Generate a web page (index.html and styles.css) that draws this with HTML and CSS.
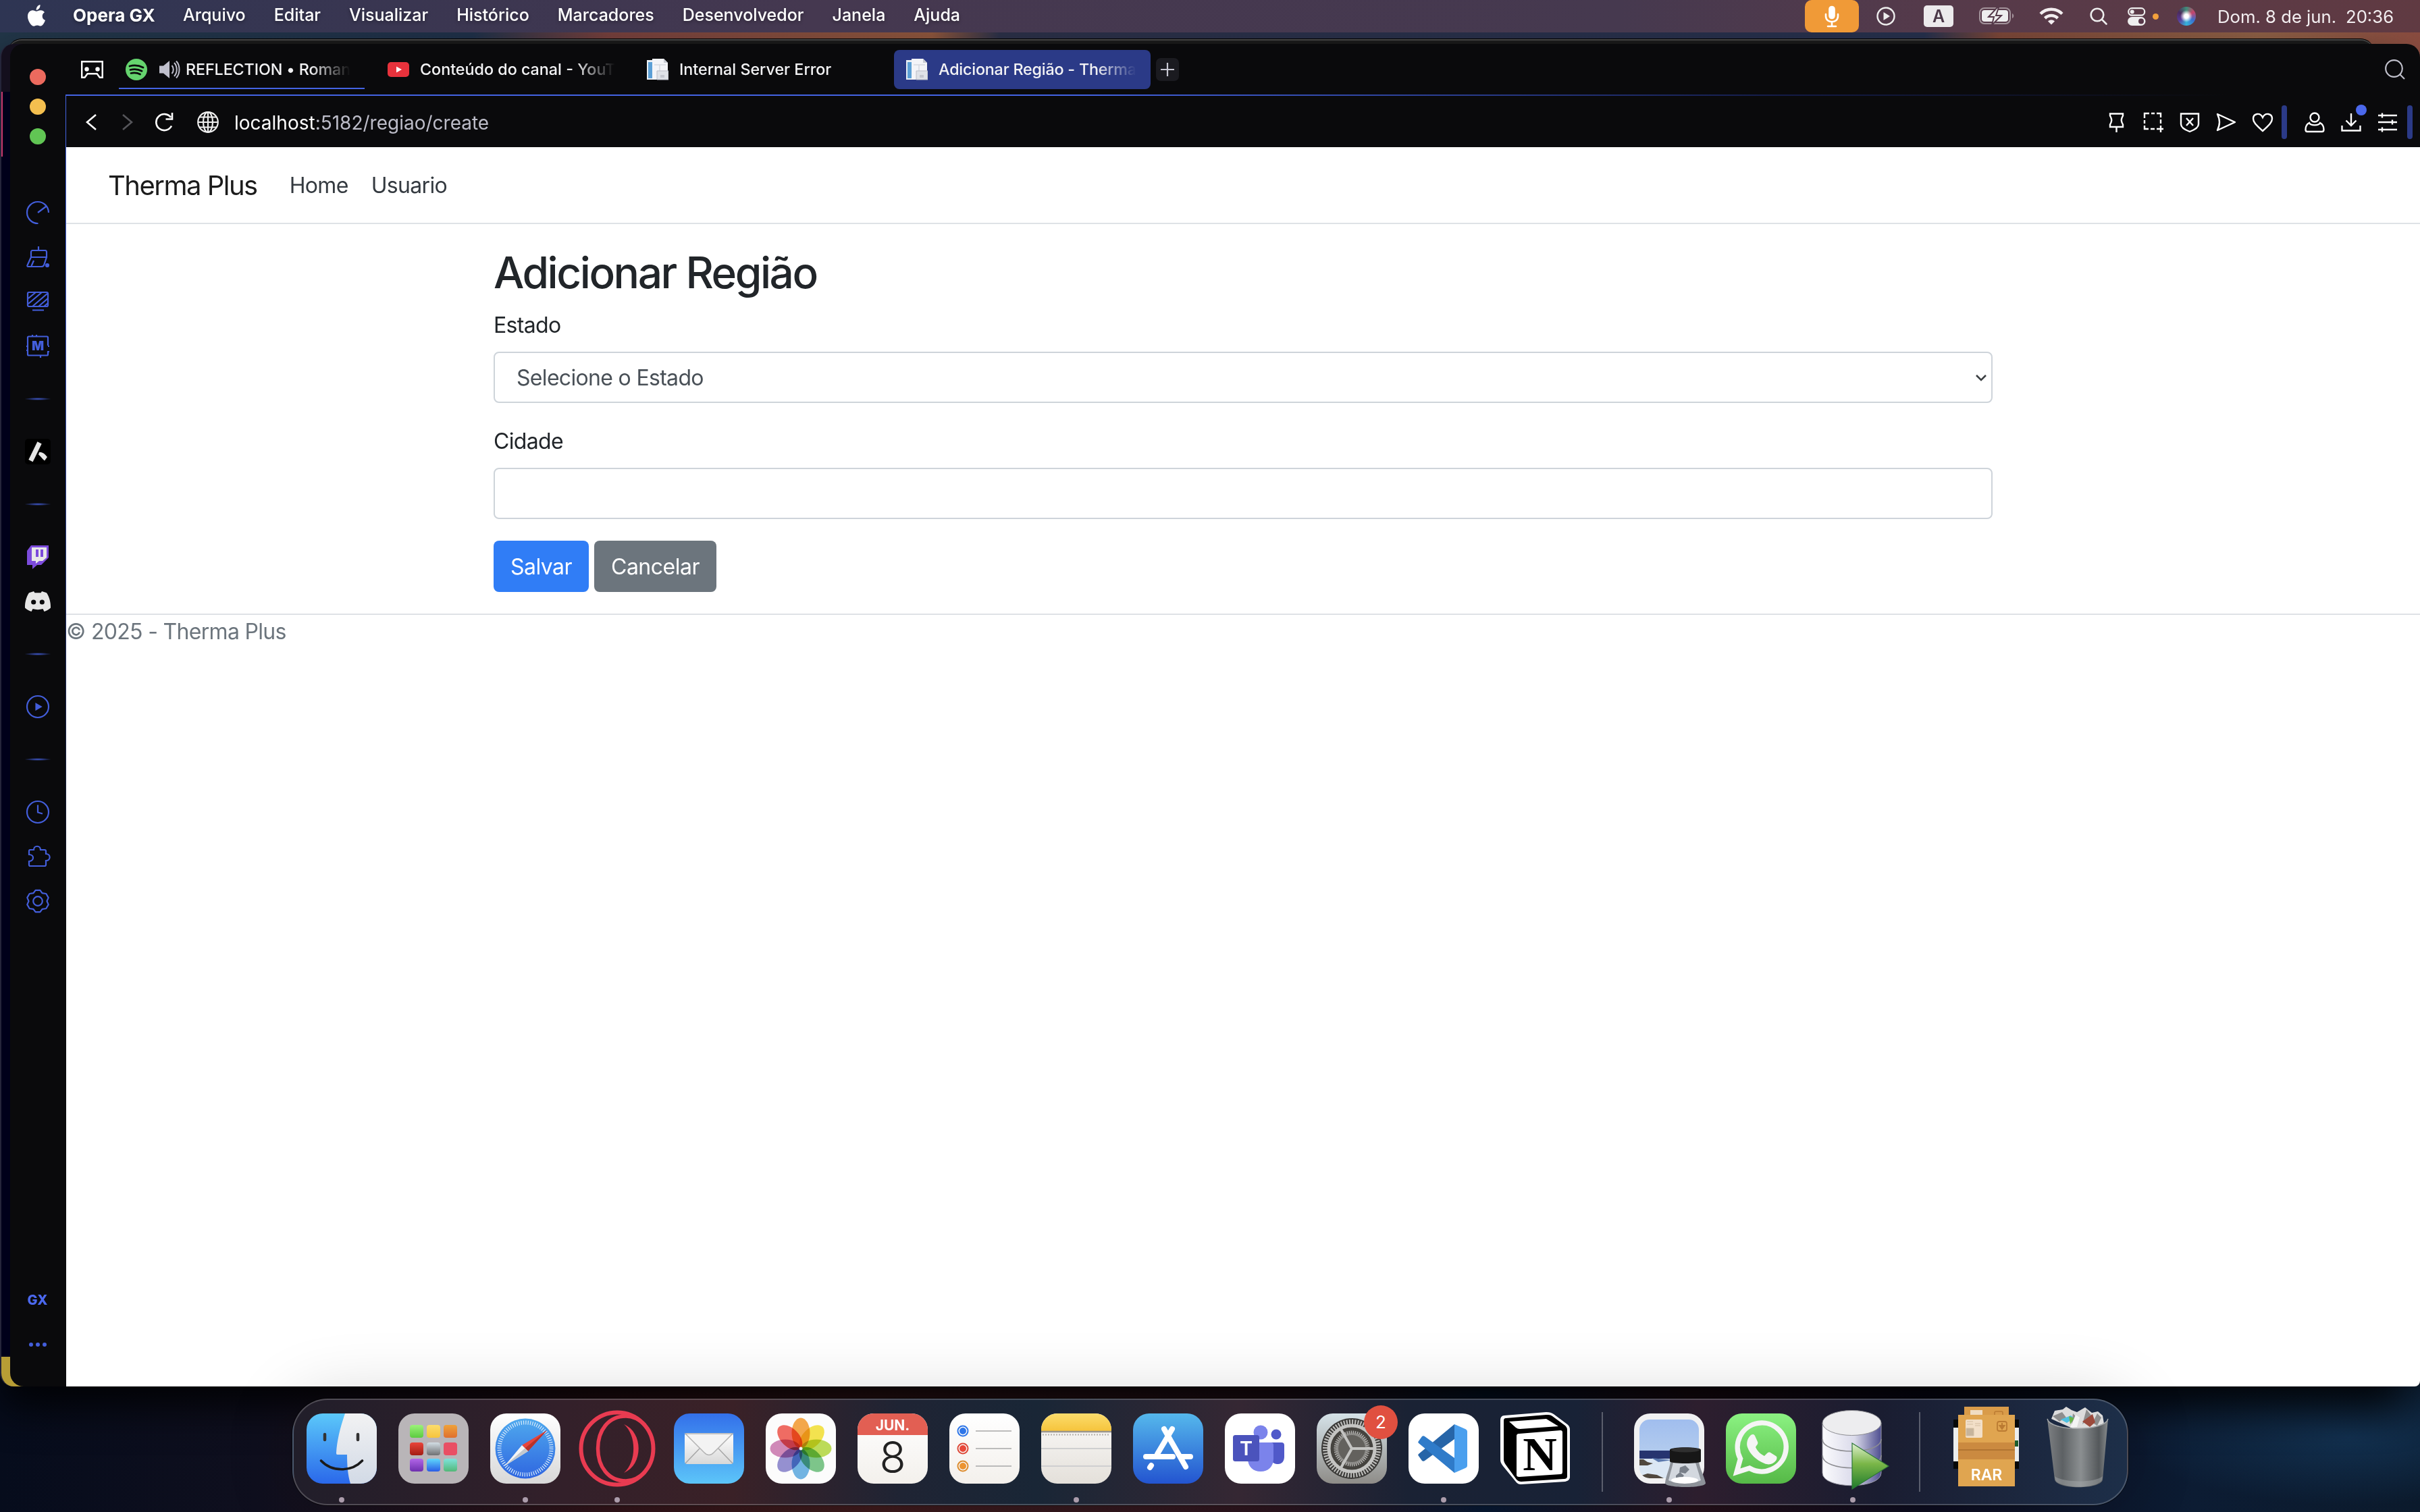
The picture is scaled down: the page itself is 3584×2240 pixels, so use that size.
FILE: index.html
```html
<!DOCTYPE html>
<html lang="pt-BR">
<head>
<meta charset="utf-8">
<title>Adicionar Região - Therma Plus</title>
<link rel="stylesheet" href="styles.css">
</head>
<body>
<svg class="defs" width="0" height="0">
  <defs>
    <symbol id="page" viewBox="0 0 32 32">
      <path d="M0 2h20v29H0z" fill="#e9eef4"/><path d="M2 5h6v24H2z" fill="#5b9fd6"/>
      <path d="M8 0h17l6 6v24H8z" fill="#f3f4f8"/><path d="M25 0v6h6z" fill="#c6cad2"/>
      <path d="M11 9h17M19 9v12" stroke="#d5d8e0" stroke-width="1.5"/>
      <path d="M15 18h17v13H15z" fill="#dfe2e8" stroke="#b9bcc6"/><path d="M20 24h6v4h-6z" fill="#c4c7d0"/>
    </symbol>
    <linearGradient id="gFinder" x2="0" y2="1"><stop stop-color="#5bc8fa"/><stop offset="1" stop-color="#2a68ea"/></linearGradient>
    <linearGradient id="gFace" x2="0" y2="1"><stop stop-color="#f2f2f3"/><stop offset="1" stop-color="#d2dae6"/></linearGradient>
    <linearGradient id="gWhite" x2="0" y2="1"><stop stop-color="#fff"/><stop offset="1" stop-color="#d8d8d8"/></linearGradient>
    <linearGradient id="gPaper" x2="0" y2="1"><stop stop-color="#fff"/><stop offset="1" stop-color="#f3f0ec"/></linearGradient>
    <linearGradient id="gNote" x2="0" y2="1"><stop stop-color="#fbfaf9"/><stop offset="1" stop-color="#e4e0da"/></linearGradient>
    <linearGradient id="gYellow" x2="0" y2="1"><stop stop-color="#fbdc6c"/><stop offset="1" stop-color="#f6c43c"/></linearGradient>
    <linearGradient id="gSafari" x2="0" y2="1"><stop stop-color="#4fa9ee"/><stop offset="1" stop-color="#2f66e0"/></linearGradient>
    <linearGradient id="gMail" x2="0" y2="1"><stop stop-color="#3370ea"/><stop offset="1" stop-color="#5cc5f9"/></linearGradient>
    <linearGradient id="gStore" x2="0" y2="1"><stop stop-color="#55b8ec"/><stop offset="1" stop-color="#2354d0"/></linearGradient>
    <linearGradient id="gSet" x2="0" y2="1"><stop stop-color="#d5e2e8"/><stop offset="1" stop-color="#8e8c88"/></linearGradient>
    <linearGradient id="gWa" x2="0" y2="1"><stop stop-color="#8bf282"/><stop offset="1" stop-color="#56b947"/></linearGradient>
    <linearGradient id="gCyl"><stop stop-color="#fbfbfd"/><stop offset=".55" stop-color="#dadaea"/><stop offset="1" stop-color="#4e4e90"/></linearGradient>
    <linearGradient id="gPlay" x2="0" y2="1"><stop stop-color="#e2f2d2"/><stop offset=".45" stop-color="#7ab648"/><stop offset="1" stop-color="#1f7a2c"/></linearGradient>
    <linearGradient id="gCan"><stop stop-color="#7d8083"/><stop offset=".25" stop-color="#5d6164"/><stop offset=".55" stop-color="#8b8f91"/><stop offset=".85" stop-color="#54585b"/><stop offset="1" stop-color="#888c8e"/></linearGradient>
    <linearGradient id="gSky" x2="0" y2="1"><stop stop-color="#9dbbee"/><stop offset="1" stop-color="#b2cbee"/></linearGradient>
    <linearGradient id="gG1" x2="0" y2="1"><stop stop-color="#9cf279"/><stop offset="1" stop-color="#5ccb41"/></linearGradient>
    <linearGradient id="gG3" x2="0" y2="1"><stop stop-color="#efa23a"/><stop offset="1" stop-color="#df6f2d"/></linearGradient>
    <linearGradient id="gG4" x2="0" y2="1"><stop stop-color="#e9443a"/><stop offset="1" stop-color="#a31d14"/></linearGradient>
    <linearGradient id="gG5" x2="0" y2="1"><stop stop-color="#d2dde4"/><stop offset="1" stop-color="#6f7173"/></linearGradient>
    <linearGradient id="gG7" x2="0" y2="1"><stop stop-color="#b266e8"/><stop offset="1" stop-color="#6e2fae"/></linearGradient>
    <linearGradient id="gG8" x2="0" y2="1"><stop stop-color="#5fd8fb"/><stop offset="1" stop-color="#2a5ce6"/></linearGradient>
    <linearGradient id="gG9" x2="0" y2="1"><stop stop-color="#7fe3dc"/><stop offset="1" stop-color="#52b878"/></linearGradient>
    <clipPath id="tile"><rect width="104" height="104" rx="24"/></clipPath>
    <clipPath id="pic"><rect x="8" y="9" width="88" height="87" rx="15"/></clipPath>
  </defs>
</svg>

<header class="menubar">
  <svg class="apple" viewBox="0 0 26 32"><path fill="#fff" d="M18.500 0c.3 2.900-.9 5-2.300 6.300-1.200 1.200-2.700 1.700-3.500 1.600-.2-2.300.8-4.500 2.100-5.800C15.800 1 17.300.2 18.500 0zM25 11.300c-2.600 1.700-3.300 3.700-3.300 5.600 0 2.700 1.500 5 4.300 6.200-1.300 3.800-4 8.400-6.700 8.500-2 .1-2.700-1.200-5.100-1.200-2.400 0-3.100 1.200-5 1.300C5.300 31.800 0 23.600 0 17.400 0 11.800 3.400 8.300 7.300 8.300c2.400 0 4.100 1.400 5.600 1.400 1.500 0 3.600-1.600 6.400-1.500 2.500.1 4.500 1.200 5.700 3.100z"/></svg>
  <nav class="menus"><b>Opera GX</b><span>Arquivo</span><span>Editar</span><span>Visualizar</span><span>Histórico</span><span>Marcadores</span><span>Desenvolvedor</span><span>Janela</span><span>Ajuda</span></nav>
  <div class="status">
    <span class="mic"><svg width="24" height="34" viewBox="0 0 24 34" fill="none" stroke="#fff" stroke-width="2.600" stroke-linecap="round"><rect x="8.500" y="3" width="7" height="17" rx="3.500" fill="#fff"/><path d="M3 14v3c0 11 18 11 18 0v-3M12 26v5M6 32h12"/></svg></span>
    <svg class="s-play" width="28" height="28" viewBox="0 0 28 28"><circle cx="14" cy="14" r="12.500" fill="none" stroke="#eee" stroke-width="2.400"/><path d="M10.500 8l9.500 6-9.500 6z" fill="#eee"/></svg>
    <span class="s-a">A</span>
    <svg class="s-bat" width="52" height="26" viewBox="0 0 52 26"><rect x="1" y="1" width="45" height="23" rx="7" fill="none" stroke="#a2929a" stroke-width="2"/><rect x="4" y="4" width="39" height="17" rx="4" fill="#eee"/><path d="M49 9c3 1 3 6 0 7z" fill="#a2929a"/><path d="M27 0L14 14h8l-3 12 14-14h-8l4-12z" fill="#eee" stroke="#55394a" stroke-width="2"/></svg>
    <svg class="s-wifi" width="36" height="26" viewBox="0 0 36 26" fill="none" stroke="#f3eef0" stroke-width="4.500"><path d="M2 9.500c9-9 23-9 32 0M8.500 16c5.500-5.200 13.500-5.200 19 0"/><path d="M13 20.500c3-2.600 7-2.600 10 0l-5 5z" fill="#f3eef0" stroke="none"/></svg>
    <svg class="s-find" width="26" height="26" viewBox="0 0 26 26" fill="none" stroke="#eee" stroke-width="2.600" stroke-linecap="round"><circle cx="11" cy="11" r="9.300"/><path d="M18 18l6.500 6.500"/></svg>
    <svg class="s-cc" width="27" height="27" viewBox="0 0 27 27"><rect x="1.200" y="1.200" width="24" height="10.500" rx="5.200" fill="none" stroke="#eee" stroke-width="2.200"/><circle cx="6.700" cy="6.500" r="3" fill="#eee"/><rect y="14" width="26.500" height="13" rx="6.500" fill="#eee"/><circle cx="20" cy="20.500" r="4" fill="#59394a"/></svg>
    <i class="s-dot"></i>
    <i class="siri"></i>
    <span class="date">Dom. 8 de jun.</span><span class="time">20:36</span>
  </div>
</header>

<div class="win-gray"></div>
<div class="win-navy"><i class="pink"></i><i class="gold"></i></div>

<section class="opera">
  <aside class="side">
    <div class="lights"><i class="r"></i><i class="y"></i><i class="g"></i></div>
    <div class="tools">
      <div class="slot"><svg viewBox="0 0 34 34"><path d="M17.500 33A16 16 0 1 1 33 17M17 17L29 8"/></svg></div>
      <div class="slot"><svg viewBox="0 0 34 34"><path d="M18 1v6M7 17V9.500C7 8 8 7 9 7h19c1 0 2 1 2 2.500V17zM7 17L1.500 29c-.5 1 0 2 1 2H22c2.500 0 3.500-1 4-2l4-12M11 22l-3.500 8"/><circle cx="31" cy="29" r="2" fill="#435edb"/></svg></div>
      <div class="slot"><svg viewBox="0 0 34 34"><rect x="2" y="3" width="30" height="21" rx="2"/><path d="M9 29.500h17M3 12L14 3M3 20L23 3M9 24L31 5M18 24l14-12M26 24l6-5"/></svg></div>
      <div class="slot"><svg viewBox="0 0 34 34"><path d="M32 16V4c0-1-.5-1.500-1.500-1.500h-27C2.500 2.500 2 3 2 4v25c0 1 .5 1.500 1.500 1.500h27c1 0 1.500-.5 1.500-1.500v-4.500M0 17h2M0 23h2M9 0v2M15 0v2M21 31v3M32 17h2M31 25h3"/></svg><b class="m">M</b></div>
      <div class="sep"></div>
      <div class="slot"><svg class="raw w38" viewBox="0 0 38 38"><rect width="38" height="38" rx="5" fill="#000"/><path d="M10 29.500L20 9" stroke="#e6e6e6" stroke-width="7" stroke-linecap="square"/><path d="M21 20c5-.5 8 2 12 7l-4 5.500c-4-3-5-6-9-9z" fill="#e6e6e6"/></svg></div>
      <div class="sep"></div>
      <div class="slot"><svg class="raw w32" viewBox="0 0 32 35"><path d="M6 0h26v18L21 29h-6l-7 6v-6H0V8z" fill="#7c4bdc"/><path d="M7 3h22v15l-6 5h-5l-5 4v-4H7z" fill="#e8e8e8"/><path d="M13 6h4v11h-4zM20 6h4v11h-4z" fill="#7c4bdc"/></svg></div>
      <div class="slot"><svg class="raw w38" viewBox="0 0 38 30"><path d="M13 0l1.500 2.200h9L25 0l7 2.300c4 6 6.300 14 6 22.200-2.500 2.500-6 4.500-9.500 5.500l-2-4c-5 1.500-10 1.500-15 0l-2 4C6 29 2.500 27 0 24.500-.3 16.300 2 8.300 6 2.300z" fill="#e6e6e6"/><circle cx="12.700" cy="16" r="3.600" fill="#0a0a0c"/><circle cx="25.300" cy="16" r="3.600" fill="#0a0a0c"/></svg></div>
      <div class="sep"></div>
      <div class="slot"><svg viewBox="0 0 34 34"><circle cx="17" cy="17" r="16"/><path d="M14.500 13l7 4-7 4z" fill="#435edb"/></svg></div>
      <div class="sep"></div>
      <div class="slot"><svg viewBox="0 0 34 34"><circle cx="17" cy="17" r="16"/><path d="M17 6.500v11l7 2"/></svg></div>
      <div class="slot"><svg viewBox="0 0 34 34"><path d="M4 9c0-1 .5-2 1.500-2H11c0-7 10-7 10 0h6c1 0 2 1 2 2v4c7.500 0 7.500 10 0 10v6c0 1-1 2-2 2H5.500C4.500 31 4 30 4 29v-5c8-.5 8-10 0-10z"/></svg></div>
      <div class="slot"><svg viewBox="0 0 34 34" stroke-linejoin="round"><circle cx="17" cy="17" r="6.800"/><path d="M13.600.9h6.800l3.100 4.300 5.800.8 3.400 5.900L30.500 17l2.200 5.100-3.400 5.900-5.800.8-3.100 4.300h-6.800l-3.100-4.300-5.800-.8-3.400-5.900L3.500 17l-2.200-5.100L4.700 6l5.800-.8z"/></svg></div>
    </div>
    <div class="gx">GX</div>
    <div class="dots"><i></i><i></i><i></i></div>
  </aside>
  <div class="main">
    <div class="tabs">
      <svg class="cassette" width="33" height="26" viewBox="0 0 33 26"><path d="M1.200 1.200h30.500v23.500h-4l-4-5.500H9.500l-4 5.500H1.200z" fill="none" stroke="#fff" stroke-width="2.400"/><circle cx="8.500" cy="12.500" r="3.200" fill="#fff"/><circle cx="24.500" cy="12.500" r="3.200" fill="#fff"/></svg>
      <div class="tab t1">
        <svg width="32" height="32" viewBox="0 0 32 32"><circle cx="16" cy="16" r="16" fill="#65d36e"/><path d="M6 11c7-2 14-1 20 2M7 16.500c6-1.600 12-.9 17 1.800M8 21.500c5-1.200 9.500-.6 13.500 1.600" fill="none" stroke="#0a0a0c" stroke-width="2.800" stroke-linecap="round"/></svg>
        <svg class="spk" width="30" height="26" viewBox="0 0 30 26"><path d="M0 7.500h6L15 0v26l-9-7.500H0z" fill="#bfbfcc"/><path d="M18.500 7c3 3 3 9 0 12M22 3c5 5.500 5 14.500 0 20M25 .5c6 6.500 6 18.500 0 25" fill="none" stroke="#bfbfcc" stroke-width="2"/></svg>
        <span>REFLECTION • Roman</span>
      </div>
      <div class="tab t2"><svg width="32" height="22" viewBox="0 0 32 22"><rect width="32" height="22" rx="5" fill="#e8323c"/><path d="M13 6.500l8 4.500-8 4.500z" fill="#fff"/></svg><span>Conteúdo do canal - YouT</span></div>
      <div class="tab t3"><svg width="32" height="32"><use href="#page"/></svg><span>Internal Server Error</span></div>
      <div class="tab t4"><svg width="32" height="32"><use href="#page"/></svg><span>Adicionar Região - Therma</span></div>
      <div class="plus"><svg width="20" height="20" viewBox="0 0 20 20"><path d="M10 0v20M0 10h20" stroke="#c8c8d2" stroke-width="2.200"/></svg></div>
      <svg class="find" width="30" height="30" viewBox="0 0 30 30" fill="none" stroke="#c0c0cc" stroke-width="2.200"><circle cx="13.500" cy="13.500" r="12.300"/><path d="M22 22l7 7"/></svg>
    </div>
    <div class="bar">
      <svg class="b-back" width="18" height="26" viewBox="0 0 18 26"><path d="M16 2L3 13l13 11" fill="none" stroke="#fff" stroke-width="2.600"/></svg>
      <svg class="b-fwd" width="18" height="26" viewBox="0 0 18 26"><path d="M2 2l13 11L2 24" fill="none" stroke="#55555a" stroke-width="2.600"/></svg>
      <svg class="b-load" width="28" height="28" viewBox="0 0 28 28" fill="none" stroke="#fff" stroke-width="2.600"><path d="M25 19.500A12 12 0 1 1 24 7M26 0v9.500h-9.500"/></svg>
      <svg class="b-globe" width="32" height="32" viewBox="0 0 32 32" fill="none" stroke="#eee" stroke-width="2.200"><circle cx="16" cy="16" r="14.800"/><ellipse cx="16" cy="16" rx="7" ry="14.800"/><path d="M16 1v30M1 16h30M3.500 8.500h25M3.500 23.500h25"/></svg>
      <div class="url"><b>localhost</b>:5182/regiao/create</div>
      <div class="acts">
        <svg viewBox="0 0 30 30"><path d="M5 2.500h19v3c-3 5-3 8 0 13V22H5v-3.500c3-5 3-8 0-13zM14.500 22v8"/></svg>
        <svg viewBox="0 0 30 30"><path d="M2 9V2h7M12 2h5M20 2h6v6M26 11v6M2 12v5M2 20v5h6M11 25h6M26 20v10M20 25h10"/></svg>
        <svg viewBox="0 0 30 30"><path d="M2 2.500h26V18c0 5-5 8-13 11C7 26 2 23 2 18zM10 9l10 11M20 9L10 20"/></svg>
        <svg viewBox="0 0 30 30"><path d="M2 3l26 12L2 27c4-9 4-15 0-24z" stroke-linejoin="round"/></svg>
        <svg viewBox="0 0 30 30"><path d="M15 28C5 19 1 15 1 10c0-8 10-10 14-2 4-8 14-6 14 2 0 5-4 9-14 18z"/></svg>
        <i class="vbar"></i>
        <svg viewBox="0 0 30 30"><circle cx="15" cy="8" r="6.500"/><path d="M7 16c-4 2-5.500 5-5.500 10 0 2 1 3 2.500 3h22c1.500 0 2.500-1 2.500-3 0-5-1.500-8-5.500-10-2 4.500-14 4.500-16 0z"/></svg>
        <span class="dl"><svg viewBox="0 0 30 30"><path d="M15 2v18M7.500 12.500L15 20l7.500-7.500M1.500 20v7.500h27V20"/></svg><i></i></span>
        <svg viewBox="0 0 30 30"><path d="M1 5h28M1 15h28M1 26h28M7 1.500v7M22 11.500v7M7 22.500v7"/></svg>
        <i class="vbar last"></i>
      </div>
    </div>
    <div class="page">
      <nav class="navbar"><a class="brand">Therma Plus</a><a>Home</a><a>Usuario</a></nav>
      <main class="container">
        <h2>Adicionar Região</h2>
        <label>Estado</label>
        <div class="control select"><span>Selecione o Estado</span><svg width="16" height="10" viewBox="0 0 16 10"><path d="M1 1l7 7 7-7" fill="none" stroke="#3c4043" stroke-width="2.600"/></svg></div>
        <label>Cidade</label>
        <div class="control"></div>
        <div class="buttons"><span class="btn save">Salvar</span><span class="btn cancel">Cancelar</span></div>
      </main>
      <footer>© 2025 - Therma Plus</footer>
    </div>
  </div>
</section>

<div class="dock">
  <div class="app on"><svg viewBox="0 0 104 104"><g clip-path="url(#tile)"><rect width="104" height="104" fill="url(#gFinder)"/><path d="M57 0C50 20 45 40 44 58c0 2 0 3 2 3h14c0 15 1 30 5 43h39V0z" fill="url(#gFace)"/></g><path d="M27 31v8M76 31v8" stroke="#333" stroke-width="4.500" stroke-linecap="round"/><path d="M21.500 70c16 17 45 17 61 0" fill="none" stroke="#1b1b1b" stroke-width="3.600" stroke-linecap="round"/></svg></div>
  <div class="app"><svg viewBox="0 0 104 104"><rect width="104" height="104" rx="24" fill="#b9b5b8"/><g><rect x="17" y="17" width="20" height="19" rx="4" fill="url(#gG1)"/><rect x="42" y="17" width="20" height="19" rx="4" fill="url(#gYellow)"/><rect x="67" y="17" width="20" height="19" rx="4" fill="url(#gG3)"/><rect x="17" y="43" width="20" height="19" rx="4" fill="url(#gG4)"/><rect x="42" y="43" width="20" height="19" rx="4" fill="url(#gG5)"/><rect x="67" y="43" width="20" height="19" rx="4" fill="#e94f64"/><rect x="17" y="67" width="20" height="19" rx="4" fill="url(#gG7)"/><rect x="42" y="67" width="20" height="19" rx="4" fill="url(#gG8)"/><rect x="67" y="67" width="20" height="19" rx="4" fill="url(#gG9)"/></g></svg></div>
  <div class="app on"><svg viewBox="0 0 104 104"><rect width="104" height="104" rx="24" fill="url(#gWhite)"/><circle cx="52" cy="52" r="44.500" fill="url(#gSafari)"/><circle cx="52" cy="52" r="38.500" fill="none" stroke="#d8ebfb" stroke-width="6" stroke-dasharray="1.200 2.160"/><path d="M84 25L47 47l9 9z" fill="#e8453c"/><path d="M84 25L51.500 51.500l4.500 4.500z" fill="#b93229"/><path d="M21 78l26-31 9 9z" fill="#f5f5f5"/><path d="M21 78l30.500-26.500L56 56z" fill="#c3c8ce"/></svg></div>
  <div class="app on"><svg viewBox="5 5 104 104"><circle cx="57" cy="57" r="53.500" fill="none" stroke="#e93b51" stroke-width="6"/><path d="M98 22C89 13 80 9 70 9 44 9 28.500 30 28.500 57S44 105 70 105c10 0 19-4 28-13" fill="none" stroke="#e93b51" stroke-width="5.500"/><path d="M67 21c29 12 29 60 0 72 19-16 19-56 0-72z" fill="#e93b51"/></svg></div>
  <div class="app"><svg viewBox="0 0 104 104"><rect width="104" height="104" rx="24" fill="url(#gMail)"/><rect x="16" y="29" width="72" height="46" rx="4" fill="url(#gWhite)"/><path d="M17 74l21-22M87 74L66 52" stroke="#a6a6a6" stroke-width="1.500"/><path d="M17 30l28 28c4 4.500 10 4.500 14 0l28-28z" fill="#f3f3f3" stroke="#b2b2b2" stroke-width="1.500"/></svg></div>
  <div class="app"><svg viewBox="0 0 104 104"><rect width="104" height="104" rx="24" fill="#fcfcfc"/><g class="petals"><ellipse cx="52" cy="29" rx="13.500" ry="22.500" fill="#f2a03c"/><ellipse cx="52" cy="29" rx="13.500" ry="22.500" fill="#f2e040" transform="rotate(45 52 52)"/><ellipse cx="52" cy="29" rx="13.500" ry="22.500" fill="#b7d84b" transform="rotate(90 52 52)"/><ellipse cx="52" cy="29" rx="13.500" ry="22.500" fill="#72c080" transform="rotate(135 52 52)"/><ellipse cx="52" cy="29" rx="13.500" ry="22.500" fill="#66aee0" transform="rotate(180 52 52)"/><ellipse cx="52" cy="29" rx="13.500" ry="22.500" fill="#8c86cc" transform="rotate(225 52 52)"/><ellipse cx="52" cy="29" rx="13.500" ry="22.500" fill="#cc7fb2" transform="rotate(270 52 52)"/><ellipse cx="52" cy="29" rx="13.500" ry="22.500" fill="#ee5f56" transform="rotate(315 52 52)"/></g><circle cx="52" cy="52" r="2.500" fill="#eee"/></svg></div>
  <div class="app"><svg viewBox="0 0 104 104"><g clip-path="url(#tile)"><rect width="104" height="104" fill="url(#gPaper)"/><rect width="104" height="32" fill="#e25f53"/></g><text x="52" y="25" class="cal-m">JUN.</text><text x="52" y="88" class="cal-d">8</text></svg></div>
  <div class="app"><svg viewBox="0 0 104 104"><rect width="104" height="104" rx="24" fill="url(#gPaper)"/><g fill="none" stroke-width="2"><circle cx="20" cy="26" r="7.500" stroke="#2f76e8"/><circle cx="20" cy="52" r="7.500" stroke="#dd4a3a"/><circle cx="20" cy="78" r="7.500" stroke="#dd8c2e"/></g><circle cx="20" cy="26" r="5" fill="#2f76e8"/><circle cx="20" cy="52" r="5" fill="#e8483a"/><circle cx="20" cy="78" r="5" fill="#ec9430"/><path d="M39 26h53M39 52h53M39 78h53" stroke="#a8a8a8" stroke-width="1.600"/></svg></div>
  <div class="app on"><svg viewBox="0 0 104 104"><g clip-path="url(#tile)"><rect width="104" height="104" fill="url(#gNote)"/><rect width="104" height="26" fill="url(#gYellow)"/><path d="M0 27h104" stroke="#9a958c" stroke-width="2.500"/><path d="M2 31.500h100" stroke="#b4b0aa" stroke-width="2" stroke-dasharray="2 2"/><path d="M0 52h104M0 78h104" stroke="#cfcfd0" stroke-width="2"/></g></svg></div>
  <div class="app"><svg viewBox="0 0 104 104"><rect width="104" height="104" rx="24" fill="url(#gStore)"/><g stroke="#fff" stroke-width="8" stroke-linecap="round"><path d="M46 23L78 79M27 77l-2 3M19 64h40M70 64h15"/><path d="M58 23L36 60"/></g></svg></div>
  <div class="app"><svg viewBox="0 0 104 104"><rect width="104" height="104" rx="24" fill="#fff"/><circle cx="76" cy="31" r="7.500" fill="#5059c9"/><path d="M66 43h18c2.500 0 4 1.500 4 4v17c0 7-4 11-9 11s-9-2-11-6z" fill="#5059c9"/><circle cx="53" cy="28" r="10.500" fill="#7b83eb"/><path d="M38 43h30c3 0 4 1.500 4 4v20c0 12-8 19-19 19S34 79 34 67V46z" fill="#7b83eb"/><rect x="12" y="32" width="39" height="39" rx="3.500" fill="#4b53bc"/><text x="31.500" y="62" class="teams">T</text></svg></div>
  <div class="app"><svg viewBox="0 0 104 104"><rect width="104" height="104" rx="24" fill="url(#gSet)"/><circle cx="52" cy="52" r="45" fill="#3b3a38"/><circle cx="52" cy="52" r="39" fill="none" stroke="#bdbdbb" stroke-width="8" stroke-dasharray="2 2.080"/><circle cx="52" cy="52" r="34" fill="#45433f" stroke="#c4c4c2" stroke-width="5"/><circle cx="52" cy="52" r="24" fill="#6e6c68" stroke="#b0afad" stroke-width="5" stroke-dasharray="1.500 1.500"/><circle cx="52" cy="52" r="21" fill="#63615d" stroke="#8e8d8a" stroke-width="2"/><path d="M52 52h34M52 52L35 22M52 52L35 82" stroke="#c4c4c2" stroke-width="4"/></svg><span class="badge">2</span></div>
  <div class="app on"><svg viewBox="0 0 104 104"><rect width="104" height="104" rx="24" fill="#fff"/><path d="M15 63c-1-1-1-2 0-3L68 16v22L24 70c-1 1-3 1-4 0z" fill="#2765a8"/><path d="M15 41c-1 1-1 2 0 3l53 44V66L24 34c-1-1-3-1-4 0z" fill="#2f7bc9"/><path d="M68 16l16 7c2 1 3 2 3 4v50c0 2-1 3-3 4l-16 7z" fill="#4a9fee"/></svg></div>
  <div class="app"><svg viewBox="0 0 104 104"><path d="M6 3l62-5c5 0 8 1 11 3l20 15c3 2 4 5 4 8v70c0 4-3 6-7 7l-65 4c-4 0-6-1-9-5L4 78c-3-4-4-6-4-10V10c0-4 2-7 6-7z" fill="#fff"/><path d="M8 7l60-5c4 0 6 0 9 2l19 14c2 2 3 4 3 6v69c0 3-2 4-5 4l-63 4c-3 0-5-1-7-3L8 76c-2-3-3-5-3-8V11c0-3 1-4 3-4z" fill="#000"/><path d="M13 12l55-4 18 11-57 4c-3 0-4-1-6-2z" fill="#fff"/><path d="M28 30l61-5c2 0 3 1 3 3v58c0 3-1 4-3 4l-61 4c-3 0-4-1-4-3V34c0-3 1-4 4-4z" fill="#fff"/><text x="58.500" y="84" class="notion">N</text></svg></div>
  <i class="split"></i>
  <div class="app on"><svg viewBox="0 0 104 104"><rect width="104" height="104" rx="24" fill="#f1f1f2"/><g clip-path="url(#pic)"><rect width="104" height="56" fill="url(#gSky)"/><rect y="55" width="104" height="16" fill="#27346f"/><rect y="67" width="104" height="40" fill="#dbe7f4"/><path d="M0 68l14 0 6 4 8 2-8 3-20 0zM8 93l12-4 14 2 14 7-40 2z" fill="#50483f"/><path d="M26 66l30 3-20 3z" fill="#5c79ae"/></g><path d="M54 71h42c1 10 8 22 10 32 1 8-60 8-60 0 1-10 7-22 8-32z" fill="#8d9299"/><path d="M58 73h33l8 26c-10 5-38 5-48 0z" fill="#d3d8df"/><path d="M68 80l8-3 6 6-6 6-9-2zM62 92l6-5 6 5-3 4-9 1z" fill="#787f89"/><ellipse cx="75" cy="99" rx="20" ry="5" fill="#fff"/><path d="M53 54c0-5 46-5 46 0v17c0 4-46 4-46 0z" fill="#171717"/><ellipse cx="76" cy="54" rx="21" ry="3.500" fill="#303030"/></svg></div>
  <div class="app"><svg viewBox="0 0 104 104"><rect width="104" height="104" rx="24" fill="url(#gWa)"/><path d="M16 87l5.500-20A36 36 0 1 1 35 81z" fill="none" stroke="#f5f5f5" stroke-width="7.500" stroke-linejoin="miter"/><path d="M36 33c2-2 5-3 7 0l4 9c1 2 0 4-2 6l-1 2c3 6 7 10 13 13l4-4c1-1 3-2 5-1l8 5c2 1 2 4 0 7-4 5-10 7-17 4-12-5-21-13-25-24-2-6 0-13 4-17z" fill="#f5f5f5"/></svg></div>
  <div class="app on"><svg viewBox="0 0 104 104"><path d="M7 14v74c0 25 87 25 87 0V14z" fill="url(#gCyl)" stroke="#9a9aa5"/><path d="M7 38c0 24 87 24 87 0M7 62c0 25 87 25 87 0" fill="none" stroke="#8d8d92" stroke-width="1.500"/><ellipse cx="50.500" cy="14" rx="43.500" ry="18.500" fill="#ededef" stroke="#8d8d92"/><path d="M51 44l54 34-54 34z" fill="url(#gPlay)" stroke="#2c7638" stroke-width="1.200"/></svg></div>
  <i class="split"></i>
  <div class="app"><svg viewBox="0 0 104 104"><path d="M3 9h97v73H3z" fill="#070808"/><path d="M3 21h97v50H3z" fill="#eceeee"/><path d="M94 40h5v9h-5z" fill="#1d5c2c"/><path d="M19-10h66V5H19z" fill="#d99b49"/><path d="M28-5h18V5H28z" fill="#f0dcc2"/><rect x="64" y="-3" width="12" height="8" rx="2" fill="none" stroke="#bb7b32" stroke-width="1.500"/><path d="M10 2h84v106H10z" fill="#e0a550"/><path d="M10 43h84v25H10z" fill="#cb8a40"/><path d="M10 54h84" stroke="#a96d2c" stroke-width="1.500"/><rect x="21" y="9" width="25" height="27" rx="2" fill="#f2dfc8"/><path d="M22 22h11v11H22zM23 12h9M23 16h9M35 15h8M35 18h8" fill="#c6b49c" stroke="#d2bda0"/><rect x="68" y="12" width="14" height="14" rx="3" fill="none" stroke="#bb7b32" stroke-width="1.800"/><path d="M75 14v5M71.500 18h7L75 23z" fill="#bb7b32" stroke="#bb7b32" stroke-width="2"/><text x="52" y="99" class="rar">RAR</text></svg></div>
  <div class="app"><svg viewBox="0 0 104 104"><path d="M12 8L17-4l12-2 5-4 8 5 8 3 12-7 10 8 9-2 7 6 2 12-36 12z" fill="#dcdcdc"/><path d="M14 4l14-6 6 8-10 6zM44 0l8 8-10 8zM64-6l8 10-14 12zM80 0l6 6-6 12-7-4z" fill="#8d8d8d"/><path d="M26 9l15-6 4 4-10 7z" fill="#4fc0e0"/><path d="M38 4l8 3-6 9z" fill="#68b34a"/><path d="M58 12l15-11 4 12-8 7z" fill="#9c4a3c"/><path d="M48 2l6 4-4 14-10 1z" fill="#f4f4f4"/><path d="M6 8c4 19 86 19 90 0l-8 90c-2 15-68 15-71 0z" fill="url(#gCan)"/><path d="M6 8c4 19 86 19 90 0" fill="none" stroke="#a3a6a8" stroke-width="1.500"/><path d="M17 93c12 10 60 10 71 0l-1 5c-3 14-66 14-69 0z" fill="#a6aaac" opacity=".45"/></svg></div>
</div>
</body>
</html>
```
FILE: styles.css
```css
* { box-sizing: border-box; }
html, body { margin: 0; }
body {
  width: 3584px; height: 2240px; position: relative; overflow: hidden;
  font-family: Inter, "Liberation Sans", sans-serif;
  background:
    radial-gradient(ellipse 320px 100px at 3480px 2130px, #12304f, transparent),
    linear-gradient(90deg, #060c1c 0, #0f0f1e 380px, #2f1319 900px, #3c1a1c 1300px, #2a141e 1900px, #071832 2200px, #241019 2500px, #0c0c1e 2850px, #0c1c33 3250px, #0b1a2c 3584px);
}
body::before {
  content: ""; position: absolute; left: 0; right: 0; top: 0; height: 140px;
  background: linear-gradient(90deg, #223648 0, #1f3048 700px, #743f3c 900px, #8c553c 1380px, #2b3047 1480px, #26304c 2850px, #7a4638 2960px, #8c5f45 3350px, #8a4c40 3584px);
}
.defs { position: absolute; }
i { display: block; }
svg { display: block; flex: none; overflow: visible; }

.menubar {
  position: relative; z-index: 1; height: 48px; display: flex; align-items: center; padding-left: 41px;
  color: #fff; font-size: 25px; line-height: 45px; white-space: nowrap;
  background: linear-gradient(90deg, #2e3553 0, #3a3651 600px, #453850 1200px, #46394f 2400px, #563a4a 2900px, #603a42 3584px);
}
.apple { width: 26px; height: 32px; margin: -3px 41px 0 0; }
.menus { display: flex; gap: 42px; height: 48px; text-shadow: 0 2px 5px rgba(0,0,0,.35); }
.menus b { font-weight: 700; font-size: 26px; width: 121px; }
.menus span { font-weight: 500; }
.status { margin-left: auto; display: flex; align-items: center; padding-right: 36px; color: #f3eef0; }
.mic { width: 80px; height: 48px; border-radius: 10px; background: #f09a37; display: grid; place-items: center; margin-right: 26px; }
.s-play { margin-right: 42px; }
.s-a { width: 44px; height: 32px; border-radius: 5px; background: #eceaec; color: #4b3848; font-weight: 600; line-height: 32px; text-align: center; margin-right: 38px; }
.s-bat { margin-right: 37px; }
.s-wifi { margin-right: 39px; }
.s-find { margin-right: 30px; }
.s-cc { margin-right: 10px; }
.s-dot { width: 9px; height: 9px; border-radius: 50%; background: #f2a03c; margin-right: 27px; }
.siri { width: 28px; height: 28px; border-radius: 50%; margin-right: 32px; background: radial-gradient(circle at 50% 50%, #fff 0 3px, transparent 9px), conic-gradient(#3f8f7a, #c8446a, #3a6fd0, #35b3d8, #5a3a9a, #4a2b5c, #3f8f7a); }
.date { width: 176px; margin-right: 14px; font-size: 25.700px; }
.time { width: 74px; font-size: 25.700px; }

.win-gray { position: absolute; left: 12px; top: 57px; width: 3504px; height: 60px; border-radius: 20px 20px 0 0; background: #1c1c1c; border-top: 1px solid #000; box-shadow: inset 0 2px 0 #4a4a4a; }
.win-navy { position: absolute; left: 0; top: 65px; width: 3560px; height: 1989px; border-radius: 20px; background: linear-gradient(#140f1d 71px, #00001a 71px); border-left: 2px solid #25253a; overflow: hidden; box-shadow: 0 30px 60px rgba(0,0,0,.85); }
.pink { position: absolute; left: -2px; top: 71px; width: 4px; height: 96px; background: #c8386b; }
.gold { position: absolute; left: -2px; bottom: 0; width: 300px; height: 44px; background: #b79d35; }

.opera {
  position: absolute; left: 15px; top: 65px; width: 3569px; height: 1989px; display: flex; overflow: hidden;
  border-radius: 20px 20px 8px 20px; background: #0a0a0c;
}
.side { width: 82px; padding-right: 1px; display: flex; flex-direction: column; align-items: center; }
.lights { margin-top: 37px; display: grid; gap: 20px; }
.lights i { width: 24px; height: 24px; border-radius: 50%; }
.r { background: #ec6a5e; } .y { background: #f4bf4f; } .g { background: #61c554; }
.tools { margin: 68px 0 0 1px; }
.slot { height: 66px; display: grid; place-items: center; position: relative; }
.slot svg { width: 34px; height: 34px; fill: none; stroke: #435edb; stroke-width: 2.200; }
.slot svg.raw { stroke: none; height: auto; }
.slot .w38 { width: 38px; } .slot .w32 { width: 32px; }
.m { position: absolute; inset: 0; text-align: center; line-height: 65px; font-size: 19px; font-weight: 900; color: #435edb; }
.sep { height: 90px; width: 40px; background: radial-gradient(ellipse 20px 2px at 50% 50%, #435edb, transparent); }
.gx { margin-top: 544px; color: #4b68ee; font-size: 20px; line-height: 28px; font-weight: 800; }
.dots { margin-top: 49px; display: flex; gap: 4px; }
.dots i { width: 6px; height: 6px; border-radius: 50%; background: #435edb; }

.main { flex: 1; display: flex; flex-direction: column; min-width: 0; }
.tabs { height: 75px; display: flex; align-items: center; color: #f2f2f4; font-size: 23.300px; white-space: nowrap; padding: 1px 22px 0 23px; }
.cassette { margin-right: 23px; }
.tab { height: 58px; display: flex; align-items: center; gap: 16px; }
.tab span { font-weight: 500; line-height: 40px; }
.t1, .t2, .t4 { --m: linear-gradient(90deg, #000 calc(100% - 60px), transparent); }
.t1 span, .t2 span, .t4 span { -webkit-mask-image: var(--m); mask-image: var(--m); }
.t1 { width: 364px; padding: 0 8px 0 10px; border-bottom: 2px solid #4464e4; gap: 10px; padding-top: 2px; }
.t1 .spk { margin-left: 8px; }
.t1 span { margin-left: -1px; letter-spacing: -.1px; }
.t2 { width: 384px; padding: 0 10px 0 34px; }
.t3 { width: 400px; padding-left: 34px; }
.t4 { width: 380px; padding: 0 14px 0 18px; background: #2b3a87; border-radius: 8px; }
.t4 span { letter-spacing: -.2px; }
.plus { width: 34px; height: 34px; margin-left: 8px; border-radius: 7px; background: #1b1b20; display: grid; place-items: center; }
.find { margin-left: auto; }

.bar { height: 78px; display: flex; align-items: center; padding: 4px 11px 0 29px; position: relative; border-radius: 8px 0 0 0; }
.bar::before { content: ""; position: absolute; left: 0; right: 0; top: 0; height: 2px; background: linear-gradient(90deg, #4464e4 0 1500px, #141c48 2540px, transparent 3200px); }
.bar::after { content: ""; position: absolute; left: 0; top: 0; width: 1px; height: 1900px; background: linear-gradient(#4464e4 0, #4464e4 240px, transparent 1250px); z-index: 2; }
.b-back { margin-right: 36px; } .b-fwd { margin-right: 31px; } .b-load { margin-right: 35px; } .b-globe { margin-right: 23px; }
.url { color: #bcbcc8; font-size: 28px; line-height: 40px; padding-top: 2px; }
.url b { color: #fff; font-weight: 400; }
.acts { margin-left: auto; display: flex; align-items: center; gap: 24px; }
.acts svg { width: 30px; height: 30px; fill: none; stroke: #fff; stroke-width: 2.400; }
.vbar { width: 8px; height: 50px; border-radius: 4px; background: #2b3a87; margin: 0 2px 0 -11px; }
.vbar.last { margin: 0 0 0 -10px; }
.dl { position: relative; }
.dl i { position: absolute; left: 22px; top: -11px; width: 16px; height: 16px; border-radius: 50%; background: #4b68ec; }

.page { flex: 1; margin-left: 1px; background: #fff; color: #212529; font-size: 32px; line-height: 48px; letter-spacing: -.68px; }
.navbar { height: 114px; border-bottom: 2px solid #dee2e6; display: flex; align-items: center; padding: 2px 62px 0; gap: 34px; color: #343a40; }
.brand { font-size: 40px; color: #1b1b1b; margin-right: 14px; letter-spacing: -1.500px; }
.container { margin: 32px 0 0 633px; width: 2220px; }
h2 { margin: 0; padding: 1px 0 15px; font-size: 64px; line-height: 77px; font-weight: 500; letter-spacing: -2.450px; }
label { display: block; padding-top: 1px; margin-bottom: 15px; }
.control { height: 76px; border: 2px solid #ced4da; border-radius: 8px; margin-bottom: 32px; padding: 2px 7px 0 32px; display: flex; align-items: center; justify-content: space-between; color: #495057; }
.buttons { display: flex; gap: 8px; margin-bottom: 32px; }
.btn { height: 76px; line-height: 78px; border-radius: 8px; color: #fff; text-align: center; letter-spacing: -.5px; }
.save { width: 141px; background: #307df6; }
.cancel { width: 181px; background: #6c757d; }
footer { border-top: 2px solid #dee2e6; padding-top: 1px; color: #6c757d; }

.dock {
  position: absolute; left: 433px; top: 2072px; width: 2719px; height: 158px; padding: 20px 0 0 19px; display: flex; gap: 32px;
  border-radius: 52px; border: 2px solid rgba(255,255,255,.2); box-shadow: 0 0 100px rgba(0,0,0,.18), 0 0 0 1px rgba(0,0,0,.5);
  background: linear-gradient(90deg, #211e2a 0, #33202a 400px, #3a2127 650px, #1f2434 900px, #192636 1100px, #352733 1400px, #1a2234 1650px, #182236 1900px, #2d1e2e 2080px, #1a1d31 2350px, #1d2f49 2719px);
}
.app { width: 104px; height: 104px; position: relative; flex: none; }
.app svg { width: 104px; height: 104px; }
.on::after { content: ""; position: absolute; left: 48px; top: 124px; width: 8px; height: 8px; border-radius: 50%; background: #ab9cab; }
.split { width: 2px; height: 118px; margin: -2px 14px 0; background: rgba(255,255,255,.28); flex: none; }
.petals ellipse { mix-blend-mode: multiply; opacity: .92; }
.petals { isolation: isolate; }
.badge { position: absolute; left: 70px; top: -12px; width: 50px; height: 50px; border-radius: 50%; background: #e05040; color: #fff; font-size: 26px; line-height: 50px; text-align: center; }
text { text-anchor: middle; font-family: Inter, sans-serif; fill: #fff; }
.cal-m { font-size: 21px; font-weight: 700; }
.cal-d { font-size: 64px; font-weight: 300; fill: #222; }
.teams { font-size: 29px; font-weight: 600; }
.notion { font-family: "Liberation Serif", serif; font-size: 70px; font-weight: 700; fill: #000; }
.rar { font-size: 23px; font-weight: 600; }
```
